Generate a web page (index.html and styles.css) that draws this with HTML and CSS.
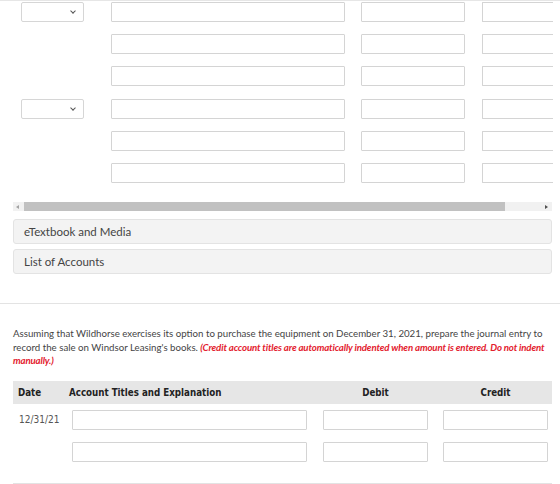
FILE: index.html
```html
<!DOCTYPE html>
<html lang="en">
<head>
    <meta charset="UTF-8">
    <title>Journal Entry</title>
    <link rel="stylesheet" href="styles.css">
</head>
<body>
    <div class="entry-wrap">
        <div class="entry-grid">
            <div class="row">
                <div class="sel"><span class="caret"></span></div>
                <div class="inp acct"></div>
                <div class="inp amt"></div>
                <div class="inp amt cut"></div>
            </div>
            <div class="row">
                <div class="blank"></div>
                <div class="inp acct"></div>
                <div class="inp amt"></div>
                <div class="inp amt cut"></div>
            </div>
            <div class="row">
                <div class="blank"></div>
                <div class="inp acct"></div>
                <div class="inp amt"></div>
                <div class="inp amt cut"></div>
            </div>
            <div class="row">
                <div class="sel"><span class="caret"></span></div>
                <div class="inp acct"></div>
                <div class="inp amt"></div>
                <div class="inp amt cut"></div>
            </div>
            <div class="row">
                <div class="blank"></div>
                <div class="inp acct"></div>
                <div class="inp amt"></div>
                <div class="inp amt cut"></div>
            </div>
            <div class="row">
                <div class="blank"></div>
                <div class="inp acct"></div>
                <div class="inp amt"></div>
                <div class="inp amt cut"></div>
            </div>
        </div>

        <!-- fake horizontal scrollbar -->
        <div class="hscroll">
            <span class="arrow left"></span>
            <span class="thumb"></span>
            <span class="track"></span>
            <span class="arrow right"></span>
        </div>

        <div class="panel first">eTextbook and Media</div>
        <div class="panel">List of Accounts</div>
    </div>

    <div class="question">
        <p>Assuming that Wildhorse exercises its option to purchase the equipment on December 31, 2021, prepare the journal entry to<br>record the sale on Windsor Leasing's books. <em class="note">(Credit account titles are automatically indented when amount is entered. Do not indent<br>manually.)</em></p>

        <div class="journal">
            <div class="jhead">
                <span class="c-date">Date</span>
                <span class="c-acct">Account Titles and Explanation</span>
                <span class="c-amt">Debit</span>
                <span class="c-amt">Credit</span>
            </div>
            <div class="jrow">
                <span class="c-date date-val">12/31/21</span>
                <div class="c-acct"><div class="inp"></div></div>
                <div class="c-amt"><div class="inp"></div></div>
                <div class="c-amt"><div class="inp"></div></div>
            </div>
            <div class="jrow">
                <span class="c-date"></span>
                <div class="c-acct"><div class="inp"></div></div>
                <div class="c-amt"><div class="inp"></div></div>
                <div class="c-amt"><div class="inp"></div></div>
            </div>
        </div>
    </div>
</body>
</html>
```

FILE: styles.css
```css
body {
    margin: 0;
    font-family: Lato, 'Open Sans', sans-serif;
    color: #333;
    background: #fff;
    border-top: 1px solid #e6e6e6;
}
.entry-wrap {
    padding: 1px 8px 0 13px;
}
.entry-grid {
    overflow: hidden;
    width: 540px;
}
.row {
    display: flex;
    height: 20px;
    margin-bottom: 12.2px;
}
.sel, .blank {
    width: 63px;
    margin: 0 27px 0 8px;
    flex: none;
}
.sel {
    box-sizing: border-box;
    height: 20px;
    border: 1px solid #d6d6d6;
    border-radius: 2px;
    position: relative;
}
.caret {
    position: absolute;
    right: 8px;
    top: 6px;
    width: 3px;
    height: 3px;
    border-right: 1.5px solid #555;
    border-bottom: 1.5px solid #555;
    transform: rotate(45deg);
}
.inp {
    box-sizing: border-box;
    height: 20px;
    border: 1px solid #d4d4d4;
    border-radius: 1px;
    background: #fff;
    flex: none;
}
.acct {
    width: 234px;
}
.amt {
    width: 104px;
    margin-left: 16px;
}
.amt.cut {
    width: 90px;
    margin-left: 17px;
    border-right: none;
}
.hscroll {
    display: flex;
    align-items: center;
    width: 539px;
    height: 9px;
    margin-top: 7px;
    background: #f1f1f1;
}
.arrow {
    width: 11px;
    height: 9px;
    position: relative;
    flex: none;
}
.arrow::after {
    content: "";
    position: absolute;
    top: 2.5px;
    border-top: 2px solid transparent;
    border-bottom: 2px solid transparent;
}
.arrow.left::after {
    left: 3px;
    border-right: 3px solid #a3a3a3;
}
.arrow.right::after {
    right: 4px;
    border-left: 3px solid #505050;
}
.thumb {
    width: 481px;
    height: 9px;
    background: #c1c1c1;
}
.track {
    flex: 1;
}
.panel {
    box-sizing: border-box;
    width: 539px;
    height: 25px;
    margin-top: 5px;
    padding-left: 10px;
    line-height: 23px;
    font-size: 11.5px;
    color: #444;
    background: #f3f3f3;
    border: 1px solid #e3e3e3;
    border-radius: 3px;
}
.panel.first {
    margin-top: 8px;
}
.question {
    margin-top: 29px;
    border-top: 1px solid #e3e3e3;
    padding: 0 8px 0 13px;
}
.question p {
    margin: 23px 0 0;
    font-size: 9.7px;
    line-height: 13.5px;
    color: #444;
    white-space: nowrap;
}
.note {
    color: #e3202d;
    font-weight: bold;
    letter-spacing: -0.15px;
}
.journal {
    width: 539px;
    margin-top: 13px;
    border-bottom: 1px solid #e3e3e3;
    padding-bottom: 21px;
    font-family: 'DejaVu Sans Condensed', 'DejaVu Sans', sans-serif;
}
.jhead {
    display: flex;
    align-items: center;
    height: 23px;
    background: #e6e6e6;
    font-size: 9.7px;
    font-weight: bold;
    color: #222;
}
.c-date {
    width: 59px;
    padding-left: 5px;
    box-sizing: border-box;
    flex: none;
}
.c-acct {
    width: 235px;
    flex: none;
}
.c-amt {
    width: 105px;
    margin-left: 16px;
    flex: none;
}
.c-amt:last-child {
    margin-left: 15px;
}
.jhead .c-acct {
    margin-left: -3px;
    margin-right: 3px;
}
.jhead .c-amt {
    text-align: center;
}
.jrow {
    display: flex;
    align-items: center;
    margin-top: 6px;
}
.jrow + .jrow {
    margin-top: 12px;
}
.date-val {
    font-size: 10px;
    color: #555;
    padding-left: 6px;
}
```
